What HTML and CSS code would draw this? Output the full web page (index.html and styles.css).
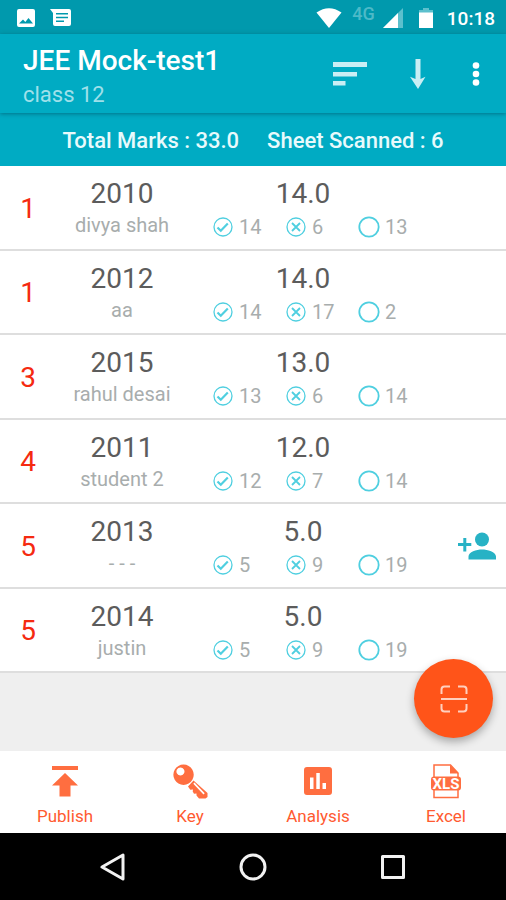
FILE: index.html
```html
<!DOCTYPE html>
<html lang="en">
<head>
    <meta charset="UTF-8">
    <meta name="viewport" content="width=device-width, initial-scale=1.0">
    <title>JEE Mock-test1</title>
    <link rel="stylesheet" href="styles.css">
</head>
<body>
    <!-- shared icons for the answer counts -->
    <svg class="sprite" aria-hidden="true">
        <symbol id="right" viewBox="0 0 22 22">
            <circle cx="11" cy="11" r="9" fill="none" stroke="currentColor" stroke-width="1.3"/>
            <path d="M5.5 11.5l3.3 3.3L15.8 7.6" fill="none" stroke="currentColor" stroke-width="2.200"/>
        </symbol>
        <symbol id="wrong" viewBox="0 0 22 22">
            <circle cx="11" cy="11" r="9" fill="none" stroke="currentColor" stroke-width="1.3"/>
            <path d="M7 7l8 8M15 7l-8 8" fill="none" stroke="currentColor" stroke-width="1.8"/>
        </symbol>
        <symbol id="blank" viewBox="0 0 22 22">
            <circle cx="11" cy="11" r="9.7" fill="none" stroke="currentColor" stroke-width="1.8"/>
        </symbol>
    </svg>

    <div class="status-bar">
        <div class="status-left">
            <svg width="20" height="20" viewBox="0 0 20 20"><path fill="#fff" fill-rule="evenodd" d="M3 1h14q2 0 2 2v14q0 2-2 2H3q-2 0-2-2V3q0-2 2-2zm0 14.5h14l-4.5-5.5-3.2 4L7 11.500z"/></svg>
            <svg width="22" height="20" viewBox="0 0 22 20"><path fill="#fff" fill-rule="evenodd" d="M0 1h19q2 0 2 2v13q0 2-2 2H5q-2 0-2-2V5zM6 5v1.600h12V5zm0 3.700v1.600h12V8.700zm0 3.700V14h8v-1.600z"/></svg>
        </div>
        <div class="status-right">
            <svg width="26" height="20" viewBox="0 0 26 20"><path fill="#fff" d="M13 20L0.500 4.500Q13-4 25.500 4.500z"/></svg>
            <span class="network">4G</span>
            <svg width="20" height="20" viewBox="0 0 20 20"><path fill="#5cc0cd" d="M20 0v20H0z"/><path fill="#fff" d="M15 5v15H0z"/></svg>
            <svg class="battery" width="14" height="20" viewBox="0 0 14 20"><path fill="#5cc0cd" d="M4 0h6v2h4v3H0V2h4z"/><path fill="#fff" d="M0 4.500h14V20H0z"/></svg>
            <span class="clock">10:18</span>
        </div>
    </div>

    <header class="app-bar">
        <div class="heading">
            <h1>JEE Mock-test1</h1>
            <p>class 12</p>
        </div>
        <div class="actions">
            <button type="button" aria-label="Sort">
                <svg width="36" height="30" viewBox="0 0 36 30"><path fill="#c9eef4" d="M1 3h34v5H1zM1 13h24v4.500H1zM1 22h12.500v4.500H1z"/></svg>
            </button>
            <button type="button" aria-label="Download">
                <svg width="18" height="30" viewBox="0 0 18 30"><path fill="#c9eef4" d="M6.500 0h5v20l5-2.200L9 30 1 17.800l5.500 2.200z"/></svg>
            </button>
            <button type="button" aria-label="More options">
                <svg width="8" height="26" viewBox="0 0 8 26"><g fill="#fff"><circle cx="4" cy="4.500" r="3.300"/><circle cx="4" cy="13" r="3.300"/><circle cx="4" cy="21.500" r="3.300"/></g></svg>
            </button>
        </div>
    </header>

    <div class="summary">
        <span>Total Marks : 33.0</span>
        <span>Sheet Scanned : 6</span>
    </div>

    <main class="results">
        <div class="row">
            <div class="rank">1</div>
            <div class="student"><h2>2010</h2><p>divya shah</p></div>
            <div class="score">
                <div class="marks">14.0</div>
                <div class="counts">
                    <span><svg><use href="#right"/></svg>14</span>
                    <span><svg><use href="#wrong"/></svg>6</span>
                    <span><svg><use href="#blank"/></svg>13</span>
                </div>
            </div>
        </div>
        <div class="row">
            <div class="rank">1</div>
            <div class="student"><h2>2012</h2><p>aa</p></div>
            <div class="score">
                <div class="marks">14.0</div>
                <div class="counts">
                    <span><svg><use href="#right"/></svg>14</span>
                    <span><svg><use href="#wrong"/></svg>17</span>
                    <span><svg><use href="#blank"/></svg>2</span>
                </div>
            </div>
        </div>
        <div class="row">
            <div class="rank">3</div>
            <div class="student"><h2>2015</h2><p>rahul desai</p></div>
            <div class="score">
                <div class="marks">13.0</div>
                <div class="counts">
                    <span><svg><use href="#right"/></svg>13</span>
                    <span><svg><use href="#wrong"/></svg>6</span>
                    <span><svg><use href="#blank"/></svg>14</span>
                </div>
            </div>
        </div>
        <div class="row">
            <div class="rank">4</div>
            <div class="student"><h2>2011</h2><p>student 2</p></div>
            <div class="score">
                <div class="marks">12.0</div>
                <div class="counts">
                    <span><svg><use href="#right"/></svg>12</span>
                    <span><svg><use href="#wrong"/></svg>7</span>
                    <span><svg><use href="#blank"/></svg>14</span>
                </div>
            </div>
        </div>
        <div class="row">
            <div class="rank">5</div>
            <div class="student"><h2>2013</h2><p>- - -</p></div>
            <div class="score">
                <div class="marks">5.0</div>
                <div class="counts">
                    <span><svg><use href="#right"/></svg>5</span>
                    <span><svg><use href="#wrong"/></svg>9</span>
                    <span><svg><use href="#blank"/></svg>19</span>
                </div>
            </div>
            <button class="add-student" type="button" aria-label="Add student">
                <svg width="38" height="28" viewBox="0 0 38 28"><g fill="#27b2c5"><circle cx="24" cy="7.500" r="7"/><path d="M10.500 27.500v-3c0-4.500 8-7 13.500-7s14 2.500 14 7v3zM5.300 6h3v5h5v3h-5v5.500h-3V14H0v-3h5.300z"/></g></svg>
            </button>
        </div>
        <div class="row">
            <div class="rank">5</div>
            <div class="student"><h2>2014</h2><p>justin</p></div>
            <div class="score">
                <div class="marks">5.0</div>
                <div class="counts">
                    <span><svg><use href="#right"/></svg>5</span>
                    <span><svg><use href="#wrong"/></svg>9</span>
                    <span><svg><use href="#blank"/></svg>19</span>
                </div>
            </div>
        </div>
        <button class="scan" type="button" aria-label="Scan sheet">
            <svg width="28" height="28" viewBox="0 0 28 28" fill="none" stroke="#ffd0bf" stroke-width="2"><path d="M1.500 9V4.500q0-3 3-3H10M18 1.500h5.500q3 0 3 3V9M26.500 19v4.500q0 3-3 3H18M10 26.500H4.500q-3 0-3-3V19M1 14h26"/></svg>
        </button>
    </main>

    <nav class="tabs">
        <button type="button">
            <svg width="36" height="36" viewBox="0 0 36 36"><path fill="#ff6e40" d="M5 2h26v4H5zM18 9L31 21.500h-7.500v11h-11v-11H5z"/></svg>
            Publish
        </button>
        <button type="button">
            <svg width="36" height="36" viewBox="0 0 36 36"><path fill="#ff6e40" fill-rule="evenodd" d="M11.500 0.500a10.200 10.200 0 1 0 .1 0zM8.500 3.500a4 4 0 1 1-.1 0z"/><path fill="#ff6e40" fill-rule="evenodd" d="M16 22.500l5.500-6L35.500 29v4l-2 1.500h-6.500L24.500 31.500v-2l-2.500.3-1.300-2.300.3-2-2.700.2zM21.300 19.800L31.500 30.500l1.200-1.200L22.500 18.500z"/></svg>
            Key
        </button>
        <button type="button">
            <svg width="36" height="36" viewBox="0 0 36 36"><path fill="#ff6e40" fill-rule="evenodd" d="M7 3h22q3 0 3 3v22q0 3-3 3H7q-3 0-3-3V6q0-3 3-3zm3 10.500V25h3.500V13.500zM16.300 9v16h3.500V9zm6.200 10v6H26v-6z"/></svg>
            Analysis
        </button>
        <button type="button">
            <svg width="36" height="36" viewBox="0 0 36 36"><path fill="#fff" stroke="#ff6e40" stroke-width="1.500" d="M6 1h16.500l7.500 8V33.500H6z"/><path fill="#ff6e40" d="M22 1l8.500 8.500H22z"/><rect x="3" y="12.500" width="30" height="14" rx="3" fill="#ff6e40"/><text class="xls" x="18" y="25" text-anchor="middle">XLS</text></svg>
            Excel
        </button>
    </nav>

    <div class="system-nav">
        <button type="button" aria-label="Back">
            <svg width="28" height="28" viewBox="0 0 28 28"><path d="M24 2v24L3 14z"/></svg>
        </button>
        <button type="button" aria-label="Home">
            <svg width="28" height="28" viewBox="0 0 28 28"><circle cx="14" cy="14" r="12"/></svg>
        </button>
        <button type="button" aria-label="Recent apps">
            <svg width="28" height="28" viewBox="0 0 28 28"><rect x="3.500" y="3.500" width="21" height="21"/></svg>
        </button>
    </div>
</body>
</html>
```
FILE: styles.css
```css
* {
    box-sizing: border-box;
}

body {
    font-family: Roboto, sans-serif;
    display: flex;
    flex-direction: column;
    min-height: 100vh;
    margin: 0;
    background-color: #efefef;
}

h1, h2, p {
    margin: 0;
    font-weight: 400;
}

button {
    display: flex;
    align-items: center;
    justify-content: center;
    padding: 0;
    border: 0;
    background: none;
    font-family: inherit;
    cursor: pointer;
}

svg {
    display: block;
}

.sprite {
    position: absolute;
    width: 0;
    height: 0;
}

.status-bar {
    display: flex;
    justify-content: space-between;
    height: 34px;
    padding: 2px 11px 0 16px;
    background-color: #0099ad;
    color: #fff;
}

.status-left, .status-right {
    display: flex;
    align-items: center;
}

.status-left {
    gap: 14px;
}

.status-right {
    gap: 8px;
}

.network {
    padding: 0 0 8px 2px;
    font-size: 18px;
    font-weight: 500;
    line-height: 20px;
    color: #4dbac8;
}

.battery {
    margin: 0 6px 0 8px;
}

.clock {
    font-size: 19px;
    font-weight: 500;
}

.app-bar {
    display: flex;
    justify-content: space-between;
    height: 79px;
    padding: 10px 26px 0 23px;
    background-color: #00abc3;
    box-shadow: 0 1px 4px rgba(0, 60, 80, 0.5);
    position: relative;
}

.heading h1 {
    font-size: 28px;
    font-weight: 500;
    line-height: 34px;
    color: #fff;
}

.heading p {
    font-size: 22px;
    line-height: 34px;
    color: #9fe0ea;
}

.actions {
    display: flex;
    gap: 41px;
    height: 60px;
}

.actions button + button + button {
    margin-left: 4px;
}

.summary {
    display: flex;
    justify-content: center;
    gap: 28px;
    padding: 13px 0 10px;
    background-color: #00abc3;
    color: #e8fafc;
    font-size: 22px;
    font-weight: 500;
    line-height: 30px;
}

.results {
    display: grid;
    grid-auto-rows: 1fr;
    flex: 1;
    position: relative;
    padding-bottom: 78px;
}

.row {
    display: grid;
    grid-template-columns: 56fr 132fr 246fr 72fr;
    align-items: center;
    padding-top: 2px;
    background-color: #fff;
    border-bottom: 2px solid #dedede;
}

.rank {
    font-size: 28px;
    text-align: center;
    color: #f52a10;
}

.student, .score {
    padding-top: 4px;
}

.student {
    text-align: center;
}

.student h2, .marks {
    font-size: 28px;
    line-height: 34px;
    color: #5c5c5c;
}

.student p {
    padding-bottom: 4px;
    font-size: 20px;
    line-height: 28px;
    color: #a8adad;
}

.marks {
    padding-right: 16px;
    text-align: center;
}

.counts {
    display: grid;
    grid-template-columns: repeat(3, 73px);
    padding: 2px 0 2px 24px;
    font-size: 20px;
    line-height: 28px;
    color: #a8adad;
}

.counts span {
    display: flex;
    align-items: center;
    gap: 5px;
}

.counts svg {
    width: 22px;
    height: 22px;
    color: #4fcfe0;
}

.add-student {
    justify-content: flex-end;
    padding-right: 10px;
}

.scan {
    position: absolute;
    right: 13px;
    bottom: 13px;
    width: 79px;
    height: 79px;
    border-radius: 50%;
    background-color: #ff5419;
    box-shadow: 0 4px 8px rgba(0, 0, 0, 0.3);
}

.tabs {
    display: grid;
    grid-template-columns: 130fr 120fr 136fr 120fr;
    padding: 13px 0 7px;
    background-color: #fff;
}

.tabs button {
    flex-direction: column;
    gap: 6px;
    font-size: 17px;
    line-height: 20px;
    color: #ff5a30;
}

.xls {
    font-size: 15px;
    font-weight: 700;
    fill: #fff;
}

.system-nav {
    display: flex;
    justify-content: space-around;
    height: 67px;
    padding: 0 43px;
    background-color: #000;
}

.system-nav svg {
    fill: none;
    stroke: #f2f2f2;
    stroke-width: 3;
    stroke-linejoin: round;
}
```
